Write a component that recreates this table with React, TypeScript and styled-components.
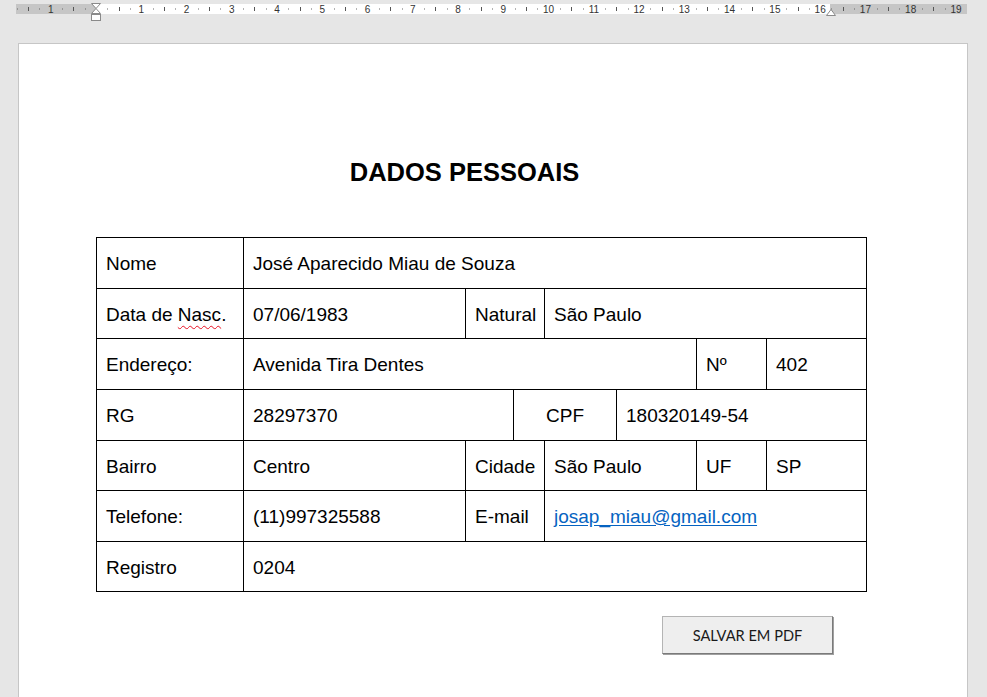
import React from "react";
import styled, { createGlobalStyle } from "styled-components";

const Global = createGlobalStyle`
  html, body { margin: 0; padding: 0; background: #e6e6e6; }
  body { font-family: "Liberation Sans", Arial, sans-serif; }
`;

const Screen = styled.div`
  width: 987px;
  height: 697px;
  overflow: hidden;
  background: #e6e6e6;
  display: flex;
  flex-direction: column;
`;

const RulerSvg = styled.svg`
  display: block;
  flex: none;
`;

const Page = styled.div`
  flex: none;
  margin: 19px 0 0 18px;
  width: 950px;
  height: 700px;
  box-sizing: border-box;
  background: #ffffff;
  border: 1px solid #c6c6c6;
  padding: 113px 0 0 77px;
  display: flex;
  flex-direction: column;
`;

const Title = styled.h1`
  margin: 0;
  width: 737px;
  text-align: center;
  font-family: "Liberation Sans", Arial, sans-serif;
  font-weight: bold;
  font-size: 25.5px;
  line-height: 30px;
  color: #000;
`;

const Table = styled.div`
  margin-top: 50px;
  display: grid;
  grid-template-columns: 147px 222px 48px 31px 72px 80px 70px 100px;
  grid-template-rows: 51px 50px 51px 51px 50px 51px 50px;
  width: fit-content;
  border-top: 1px solid #000;
  border-left: 1px solid #000;
`;

const Cell = styled.div<{ $span?: number; $center?: boolean }>`
  grid-column: span ${(p) => p.$span ?? 1};
  box-sizing: border-box;
  border-right: 1px solid #000;
  border-bottom: 1px solid #000;
  display: flex;
  align-items: center;
  justify-content: ${(p) => (p.$center ? "center" : "flex-start")};
  padding: 2px 0 0 ${(p) => (p.$center ? "0" : "9px")};
  font-family: "Liberation Sans", Arial, sans-serif;
  font-size: 19px;
  color: #000;
  white-space: nowrap;
`;

const Misspelled = styled.span`
  text-decoration: underline wavy #e81123;
  text-decoration-thickness: 1px;
  text-underline-offset: 4px;
  text-decoration-skip-ink: none;
`;

const MailLink = styled.a`
  color: #0563c1;
  text-decoration: underline;
  text-underline-offset: 2px;
`;

const ButtonRow = styled.div`
  margin-top: 24px;
  width: 771px;
  display: flex;
  justify-content: flex-end;
  padding-right: 34px;
  box-sizing: border-box;
`;

const PdfButton = styled.button`
  width: 171px;
  height: 38px;
  box-sizing: border-box;
  background: #eeeeee;
  border: 1px solid #b4b4b4;
  border-right-color: #7a7a7a;
  border-bottom-color: #7a7a7a;
  box-shadow: 1px 1px 0 #a0a0a0;
  font-family: Lato, "Liberation Sans", sans-serif;
  font-size: 14.6px;
  color: #1a1a1a;
  padding: 0;
  cursor: pointer;
`;

const U = 45.26;
const O = 96;

function Ruler() {
  const ticks: React.ReactNode[] = [];
  for (let q = -7; q <= 76; q++) {
    const x = O + (q / 4) * U;
    if (x > 965) continue;
    const r = ((q % 4) + 4) % 4;
    if (r === 0) {
      const n = q / 4;
      if (n === 0) continue;
      ticks.push(
        <text
          key={q}
          x={x}
          y={12.5}
          textAnchor="middle"
          fontSize={10}
          fontFamily="Liberation Sans, Arial, sans-serif"
          fill="#333"
        >
          {Math.abs(n)}
        </text>
      );
    } else if (r === 2) {
      ticks.push(<rect key={q} x={Math.round(x)} y={7} width={1} height={4} fill="#555" />);
    } else {
      ticks.push(<rect key={q} x={Math.round(x)} y={8.5} width={1} height={1} fill="#666" />);
    }
  }
  return (
    <RulerSvg width={987} height={24} viewBox="0 0 987 24">
      <rect x={16} y={4} width={80} height={10} fill="#c6c6c6" />
      <rect x={96} y={4} width={734} height={10} fill="#ffffff" />
      <rect x={830} y={4} width={137} height={10} fill="#c6c6c6" />
      {ticks}
      <path d="M91.5 3.5 H100.5 L96 8.5 Z" fill="#fff" stroke="#8a8a8a" />
      <path d="M96 8.5 L91.5 13.5 H100.5 Z" fill="#fff" stroke="#8a8a8a" />
      <rect x={91.5} y={14.5} width={9} height={6} fill="#fff" stroke="#8a8a8a" />
      <path d="M831 9.5 L826.5 15.5 H835.5 Z" fill="#fff" stroke="#8a8a8a" />
    </RulerSvg>
  );
}

export default function App() {
  return (
    <>
      <Global />
      <Screen>
        <Ruler />
        <Page>
          <Title>DADOS PESSOAIS</Title>
          <Table>
            <Cell>Nome</Cell>
            <Cell $span={7}>José Aparecido Miau de Souza</Cell>

            <Cell>
              Data de&nbsp;<Misspelled>Nasc</Misspelled>.
            </Cell>
            <Cell>07/06/1983</Cell>
            <Cell $span={2}>Natural</Cell>
            <Cell $span={4}>São Paulo</Cell>

            <Cell>Endereço:</Cell>
            <Cell $span={5}>Avenida Tira Dentes</Cell>
            <Cell>Nº</Cell>
            <Cell>402</Cell>

            <Cell>RG</Cell>
            <Cell $span={2}>28297370</Cell>
            <Cell $span={2} $center>CPF</Cell>
            <Cell $span={3}>180320149-54</Cell>

            <Cell>Bairro</Cell>
            <Cell>Centro</Cell>
            <Cell $span={2}>Cidade</Cell>
            <Cell $span={2}>São Paulo</Cell>
            <Cell>UF</Cell>
            <Cell>SP</Cell>

            <Cell>Telefone:</Cell>
            <Cell>(11)997325588</Cell>
            <Cell $span={2}>E-mail</Cell>
            <Cell $span={4}>
              <MailLink href="#">josap_miau@gmail.com</MailLink>
            </Cell>

            <Cell>Registro</Cell>
            <Cell $span={7}>0204</Cell>
          </Table>
          <ButtonRow>
            <PdfButton>SALVAR EM PDF</PdfButton>
          </ButtonRow>
        </Page>
      </Screen>
    </>
  );
}
